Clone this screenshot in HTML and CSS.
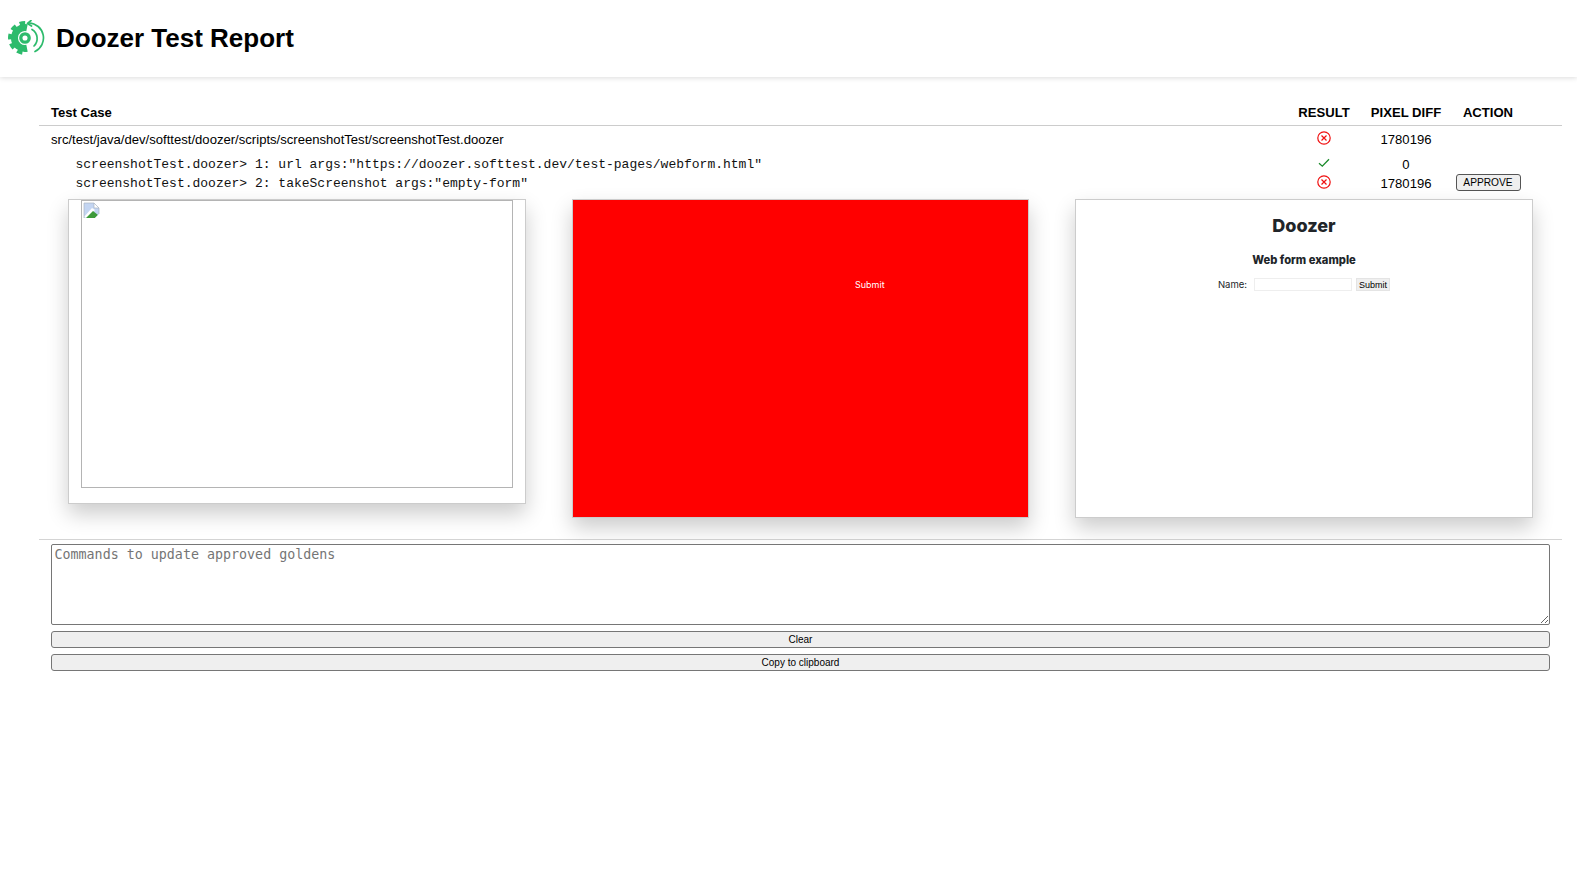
FILE: index.html
```html
<!DOCTYPE html>
<html lang="en">
<head>
<meta charset="utf-8">
<title>Doozer Test Report</title>
<link rel="stylesheet" href="styles.css">
</head>
<body>
<header class="topbar">
  <svg class="logo" width="38" height="38" viewBox="0 0 38 38" fill="none" stroke="#2dbb6c">
    <path stroke-width="7" d="M20 7.700A10.500 10.500 0 1 0 20 28.300"/>
    <circle cx="18" cy="18" r="15" stroke-width="4" stroke-dasharray="5.500 4.200 5.500 4.200 5.500 4.200 5.500 4.200 5.500 100" transform="rotate(100 18 18)"/>
    <circle cx="18" cy="18" r="4.200" stroke-width="3.300"/>
    <path stroke-width="1.700" stroke-linecap="round" d="M22 3A15 15 0 0 1 28 31.500"/>
    <path stroke-width="1.700" stroke-linecap="round" d="M25 9.500A10.500 10.500 0 0 1 27 26"/>
    <path stroke-width="1.700" stroke-linecap="round" stroke-linejoin="round" d="M24 0.500L20.500 3.500L24.500 6"/>
  </svg>
  <h1 class="title">Doozer Test Report</h1>
</header>
<main class="report">
  <div class="row head-row">
    <div class="case">Test Case</div>
    <div class="cell">RESULT</div>
    <div class="cell">PIXEL DIFF</div>
    <div class="cell">ACTION</div>
  </div>
  <div class="row suite-row">
    <div class="case">src/test/java/dev/softtest/doozer/scripts/screenshotTest/screenshotTest.doozer</div>
    <div class="cell"><svg class="icon" width="14" height="14" viewBox="0 0 14 14" fill="none" stroke="#f01010" stroke-width="1.200"><circle cx="7" cy="7" r="6.200"/><path d="M4.500 4.500l5 5M9.500 4.500l-5 5"/></svg></div>
    <div class="cell">1780196</div>
    <div class="cell"></div>
  </div>
  <div class="row step-row">
    <div class="step">screenshotTest.doozer&gt; 1: url args:"https://doozer.softtest.dev/test-pages/webform.html"</div>
    <div class="cell"><svg class="icon" width="12" height="10" viewBox="0 0 12 10" fill="none" stroke="#1a8a2a" stroke-width="1.300"><path d="M1 5.200l3.300 3L11 1.200"/></svg></div>
    <div class="cell">0</div>
    <div class="cell"></div>
  </div>
  <div class="row step-row">
    <div class="step">screenshotTest.doozer&gt; 2: takeScreenshot args:"empty-form"</div>
    <div class="cell"><svg class="icon" width="14" height="14" viewBox="0 0 14 14" fill="none" stroke="#f01010" stroke-width="1.200"><circle cx="7" cy="7" r="6.200"/><path d="M4.500 4.500l5 5M9.500 4.500l-5 5"/></svg></div>
    <div class="cell">1780196</div>
    <div class="cell"><button class="approve" type="button">APPROVE</button></div>
  </div>
  <section class="shots">
    <div class="shot golden">
      <div class="broken">
        <svg width="17" height="17" viewBox="0 0 17 17">
          <path fill="#c3d5f2" d="M1 1h10l5 5v10H1z"/>
          <path fill="#fff" d="M11 1l5 5h-5z"/>
          <path fill="#fff" d="M1 15L9 6l3 2-8 8z"/>
          <path fill="#3d9a3a" d="M3 16L10 9l5 4-3 3z"/>
          <path fill="#fff" d="M12 16l4-4v4z"/>
          <path fill="none" stroke="#aab4c2" stroke-width=".7" d="M1 16V1h10l5 5v6M11 1v5h5"/>
        </svg>
      </div>
    </div>
    <div class="shot diff"><span class="diff-label">Submit</span></div>
    <div class="shot actual">
      <div class="page-name">Doozer</div>
      <div class="page-sub">Web form example</div>
      <div class="page-form">
        <span class="page-label">Name:</span>
        <span class="page-input"></span>
        <span class="page-btn">Submit</span>
      </div>
    </div>
  </section>
  <section class="update">
    <textarea class="commands" placeholder="Commands to update approved goldens"></textarea>
    <button class="wide" type="button">Clear</button>
    <button class="wide" type="button">Copy to clipboard</button>
  </section>
</main>
</body>
</html>
```
FILE: styles.css
```css
* { box-sizing: border-box; }
html, body { margin: 0; padding: 0; background: #fff; }
body { font-family: "Liberation Sans", Arial, sans-serif; color: #000; height: 871px; overflow: hidden; }

.topbar {
  height: 77px;
  display: flex;
  align-items: center;
  padding-left: 7px;
  box-shadow: 0 1px 5px rgba(0, 0, 0, .14);
}
.logo { display: block; margin-right: 11px; margin-top: 1px; }
.title { margin: 0 0 2px; font-size: 26px; font-weight: 700; line-height: 1; }

.report { padding: 23px 15px 0 39px; }
.row {
  display: grid;
  grid-template-columns: 1fr 82px 82px 82px;
  padding: 0 33px 0 12px;
  align-items: center;
  font-size: 13.100px;
  text-align: center;
}
.case { text-align: left; }
.cell { display: flex; align-items: center; justify-content: center; }
.icon { display: block; margin-bottom: 4px; }
.head-row { height: 26px; border-bottom: 1px solid #ccc; font-weight: 700; }
.suite-row { height: 27px; }
.step-row { height: 19px; }
.suite-row + .step-row { margin-top: 2px; }
.step { text-align: left; padding-left: 24.500px; font-family: "Liberation Mono", "Courier New", monospace; font-size: 13px; white-space: pre; color: #111; }
.approve {
  width: 65px;
  height: 17px;
  padding: 0;
  margin-bottom: 2px;
  font: 10.200px "Liberation Sans", Arial, sans-serif;
  background: #efefef;
  border: 1px solid #555;
  border-radius: 3px;
  color: #000;
}

.shots {
  display: flex;
  align-items: flex-start;
  gap: 46px;
  padding: 6px 0 21px 29px;
  border-bottom: 1px solid #d4d4d4;
}
.shot { width: 458px; background: #fff; border: 1px solid #ccc; box-shadow: 0 10px 20px rgba(0, 0, 0, .2); flex: none; }
.golden { height: 305px; padding: 0 12px 15px; }
.broken { height: 288px; border: 1px solid #b4b4b4; padding: 1px; }
.broken svg { display: block; }
.diff { width: 457px; height: 319px; background: #f00; padding: 78px 0 0 282px; color: #fff; font: 9px "Inter", sans-serif; }
.diff-label { display: block; line-height: 14px; }
.actual { height: 319px; text-align: center; color: #212529; font-family: "Inter", sans-serif; padding-top: 15px; }
.page-name { font-size: 18px; font-weight: 800; line-height: 22px; }
.page-sub { font-size: 11.200px; font-weight: 800; line-height: 14px; margin-top: 16px; }
.page-form { display: flex; align-items: center; justify-content: center; margin-top: 11px; font-size: 9.500px; }
.page-label { margin-right: 7px; }
.page-input { width: 98px; height: 13px; border: 1px solid #eee; margin-right: 4px; }
.page-btn { font-family: "Liberation Sans", Arial, sans-serif; font-size: 9px; height: 13px; line-height: 12px; padding: 0 2px; background: #efefef; border: 1px solid #e4e4e4; color: #000; }

.update { padding: 4px 12px 0; display: flex; flex-direction: column; }
.commands {
  display: block;
  width: 100%;
  height: 81px;
  padding: 2px 2.500px;
  font: 13.333px "DejaVu Sans Mono", monospace;
  border: 1px solid #767676;
  border-radius: 2px;
  background: #fff;
}
.commands::placeholder { color: #757575; opacity: 1; }
.wide {
  display: block;
  width: 100%;
  height: 17px;
  margin-top: 6px;
  padding: 0;
  font: 10px "Liberation Sans", Arial, sans-serif;
  color: #000;
  background: #efefef;
  border: 1px solid #767676;
  border-radius: 3px;
}
```
